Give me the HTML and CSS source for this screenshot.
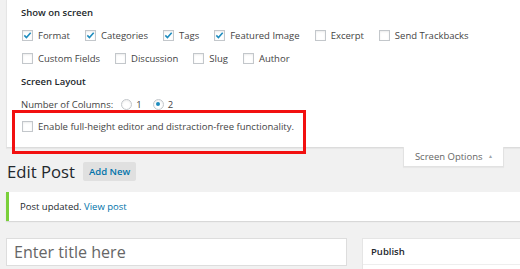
FILE: index.html
```html
<!DOCTYPE html>
<html>
<head>
<meta charset="utf-8">
<link rel="stylesheet" href="styles.css">
</head>
<body>
<div class="page">
  <div class="panel">
    <h5 class="heading">Show on screen</h5>
    <div class="row">
      <label class="opt"><span class="cb checked"><svg viewBox="0 0 11 11" width="9" height="9"><path d="M1.6 5.4 L4.2 8 L9.4 2.2" fill="none" stroke="#1e8cbe" stroke-width="1.9"/></svg></span>Format</label>
      <label class="opt"><span class="cb checked"><svg viewBox="0 0 11 11" width="9" height="9"><path d="M1.6 5.4 L4.2 8 L9.4 2.2" fill="none" stroke="#1e8cbe" stroke-width="1.9"/></svg></span>Categories</label>
      <label class="opt"><span class="cb checked"><svg viewBox="0 0 11 11" width="9" height="9"><path d="M1.6 5.4 L4.2 8 L9.4 2.2" fill="none" stroke="#1e8cbe" stroke-width="1.9"/></svg></span>Tags</label>
      <label class="opt"><span class="cb checked"><svg viewBox="0 0 11 11" width="9" height="9"><path d="M1.6 5.4 L4.2 8 L9.4 2.2" fill="none" stroke="#1e8cbe" stroke-width="1.9"/></svg></span>Featured Image</label>
      <label class="opt"><span class="cb"></span>Excerpt</label>
      <label class="opt"><span class="cb"></span>Send Trackbacks</label>
    </div>
    <div class="row">
      <label class="opt"><span class="cb"></span>Custom Fields</label>
      <label class="opt"><span class="cb"></span>Discussion</label>
      <label class="opt"><span class="cb"></span>Slug</label>
      <label class="opt"><span class="cb"></span>Author</label>
    </div>
    <h5 class="heading layout">Screen Layout</h5>
    <div class="row cols">
      <span class="cols-label">Number of Columns:</span>
      <label class="ropt"><span class="radio"></span>1</label>
      <label class="ropt"><span class="radio on"></span>2</label>
    </div>
    <div class="row enable">
      <label class="opt"><span class="cb"></span>Enable full-height editor and distraction-free functionality.</label>
    </div>
  </div>
  <div class="annot"></div>

  <div class="header-row">
    <div class="title-group">
      <h1 class="title">Edit Post</h1>
      <a class="add-new">Add New</a>
    </div>
    <div class="tab">Screen Options <span class="arrow">&#9650;</span></div>
  </div>

  <div class="notice">Post updated. <a class="link">View post</a></div>

  <div class="post-body">
    <div class="title-input">Enter title here</div>
    <div class="publish">
      <div class="publish-head">Publish</div>
    </div>
  </div>
</div>
</body>
</html>
```

FILE: styles.css
```css
html, body {
  margin: 0;
  padding: 0;
  background: #f1f1f1;
  font-family: "Open Sans", "Noto Sans", sans-serif;
  font-size: 9.5px;
  color: #444;
}
.page {
  position: relative;
  width: 520px;
  height: 269px;
  overflow: hidden;
  padding-left: 6px;
  box-sizing: border-box;
}
.panel {
  background: #fff;
  border-left: 1px solid #e5e5e5;
  border-bottom: 1px solid #dcdcdc;
  padding: 6px 0 13px 14px;
  box-shadow: 0 1px 1px rgba(0,0,0,0.04);
}
.heading {
  margin: 0;
  height: 14px;
  line-height: 14px;
  font-size: 9.5px;
  font-weight: 600;
  color: #23282d;
}
.heading.layout { margin-top: 9px; }
.row {
  display: flex;
  align-items: center;
  height: 16px;
  margin-top: 7px;
  white-space: nowrap;
}
.row.enable { margin-top: 6px; }
.opt {
  display: flex;
  align-items: center;
  margin-right: 14px;
}
.cb {
  width: 11px;
  height: 11px;
  box-sizing: border-box;
  border: 1px solid #c3c7cb;
  background: #fff;
  box-shadow: inset 0 1px 2px rgba(0,0,0,0.08);
  margin: 0 5px 0 1px;
  display: flex;
  align-items: center;
  justify-content: center;
}
.cb svg { display: block; }
.cols-label { margin-right: 8px; }
.ropt {
  display: flex;
  align-items: center;
  margin-right: 11px;
}
.radio {
  width: 11px;
  height: 11px;
  box-sizing: border-box;
  border: 1px solid #c3c7cb;
  border-radius: 50%;
  background: #fff;
  box-shadow: inset 0 1px 2px rgba(0,0,0,0.08);
  margin-right: 4px;
  display: flex;
  align-items: center;
  justify-content: center;
}
.radio.on::after {
  content: "";
  width: 4px;
  height: 4px;
  border-radius: 50%;
  background: #1e8cbe;
}
.annot {
  position: absolute;
  left: 12px;
  top: 110px;
  width: 294px;
  height: 44px;
  box-sizing: border-box;
  border: 3px solid #f21010;
  z-index: 5;
}
.header-row {
  display: flex;
  justify-content: space-between;
  align-items: flex-start;
  padding-right: 16px;
}
.title-group {
  display: flex;
  align-items: center;
  margin-top: 14px;
  padding-left: 1px;
}
.title {
  margin: 0 8px 0 0;
  font-size: 16.7px;
  font-weight: 400;
  line-height: 19px;
  color: #23282d;
}
.add-new {
  display: block;
  height: 19px;
  line-height: 19px;
  padding: 0 6px;
  background: #e0e0e0;
  color: #0073aa;
  font-weight: 600;
  border-radius: 2px;
}
.tab {
  margin-top: -1px;
  height: 20px;
  line-height: 19px;
  box-sizing: border-box;
  background: #fff;
  border: 1px solid #e2e2e2;
  border-top: none;
  box-shadow: 0 1px 1px rgba(0,0,0,0.04);
  padding: 0 10px 0 11px;
  color: #666;
  white-space: nowrap;
}
.arrow {
  font-size: 5px;
  color: #a0a5aa;
  margin-left: 3px;
  vertical-align: 2px;
}
.notice {
  margin-top: 11px;
  height: 29px;
  line-height: 29px;
  background: #fff;
  border-left: 3px solid #7ad03a;
  padding-left: 11px;
  box-shadow: 0 1px 1px rgba(0,0,0,0.1);
  color: #23282d;
}
.link { color: #0073aa; }
.post-body {
  display: flex;
  margin-top: 17px;
  gap: 15px;
}
.title-input {
  width: 341px;
  height: 28px;
  box-sizing: border-box;
  background: #fff;
  border: 1px solid #ddd;
  font-size: 16.1px;
  line-height: 26px;
  padding-left: 7px;
  color: #666;
}
.publish {
  flex: 1;
  height: 40px;
  background: #fff;
  border: 1px solid #e5e5e5;
  border-right: none;
}
.publish-head {
  height: 25px;
  line-height: 26px;
  border-bottom: 1px solid #eee;
  padding-left: 8px;
  font-weight: 600;
  color: #23282d;
}
```
